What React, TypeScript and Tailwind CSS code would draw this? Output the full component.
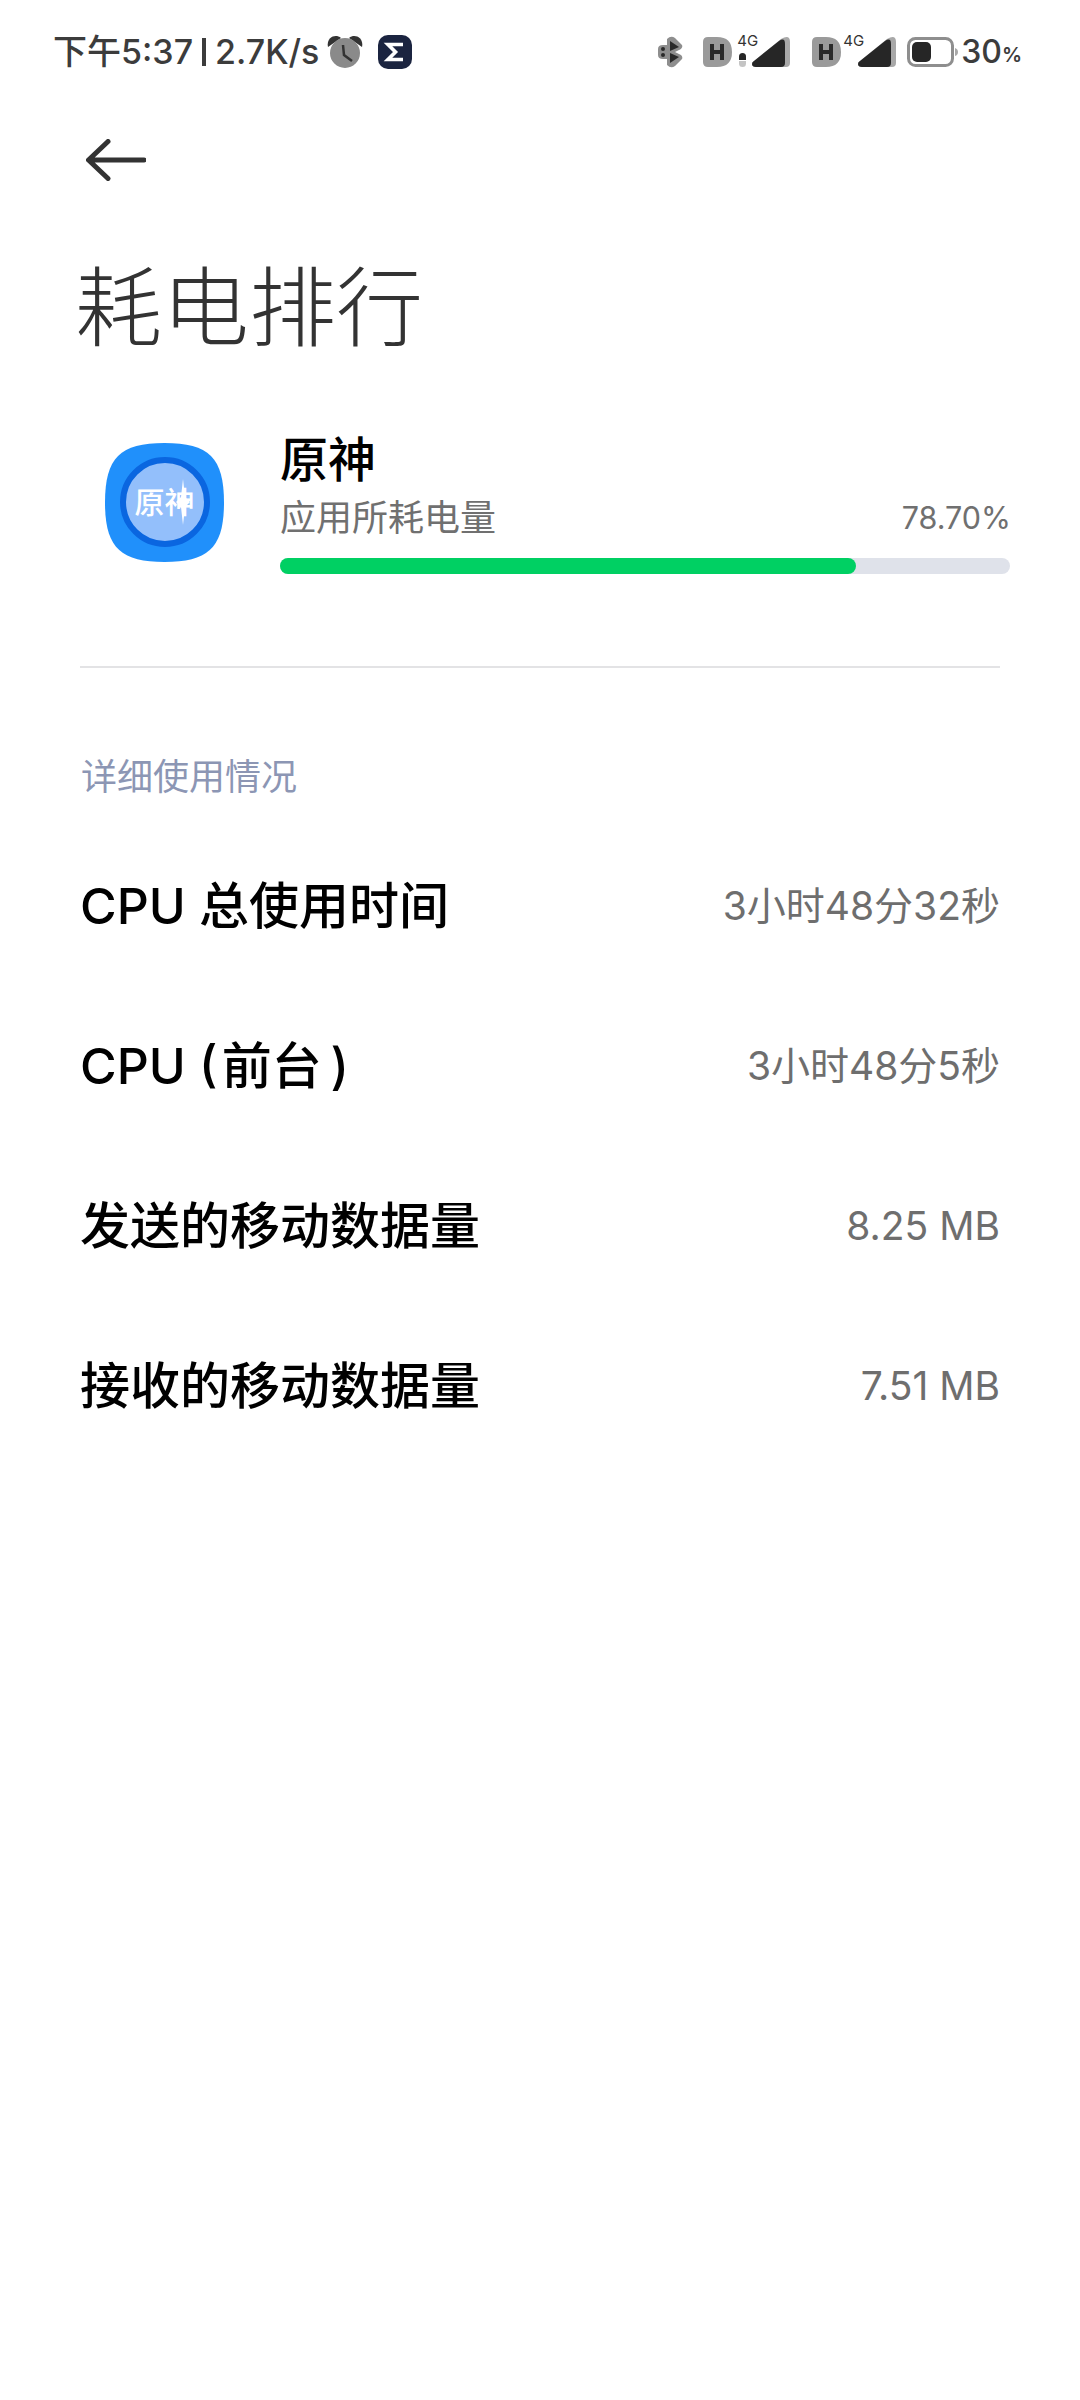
const rows = [
  { label: 'CPU 总使用时间', value: '3小时48分32秒' },
  { label: 'CPU (\u200A前台\u200A\u200A)', value: '3小时48分5秒' },
  { label: '发送的移动数据量', value: '8.25 MB' },
  { label: '接收的移动数据量', value: '7.51 MB' },
];

function AlarmIcon() {
  return (
    <svg width="36" height="34" viewBox="0 0 36 34" className="ml-[8px]">
      <path d="M1 12 C-1 3 8 -2 14 3 Z" fill="#333" />
      <path d="M35 12 C37 3 28 -2 22 3 Z" fill="#333" />
      <circle cx="18" cy="18" r="15" fill="#8a8a8a" />
      <path d="M16 10 L17 20 L25 26" fill="none" stroke="#333" strokeWidth="2.5" />
    </svg>
  );
}

function SigmaIcon() {
  return (
    <svg width="34" height="34" viewBox="0 0 34 34" className="ml-[15px]">
      <rect width="34" height="34" rx="10" fill="#1b2440" />
      <path d="M25 9.5 H10 L17.5 17 L10 24.5 H25" fill="none" stroke="#fff" strokeWidth="3.6" />
    </svg>
  );
}

function BtIcon() {
  return (
    <svg width="26" height="32" viewBox="0 0 26 32">
      <path d="M1 13 Q1 9 6 9 L12 9 L12 23 L6 23 Q1 23 1 19 Z" fill="#8e8e8e" />
      <path d="M10 3 Q14 -1 18 2 L25 9 Q26 11 24 13 L18 16 L24 19 Q26 21 25 23 L18 30 Q14 33 10 29 Z" fill="#8e8e8e" />
      <path d="M13 5 L22 11 L13 15 Z" fill="#2a2a2a" />
      <path d="M13 17 L22 21 L13 27 Z" fill="#2a2a2a" />
      <circle cx="6" cy="13" r="2" fill="#2a2a2a" />
      <circle cx="6" cy="19" r="2" fill="#2a2a2a" />
    </svg>
  );
}

function HBadge() {
  return (
    <svg width="29" height="30" viewBox="0 0 29 30">
      <path d="M0 5 Q0 0 5 0 L14 0 Q29 0 29 15 Q29 30 14 30 L5 30 Q0 30 0 25 Z" fill="#9a9a9a" />
      <path d="M9 7 V23 M19 7 V23 M9 15 H19" fill="none" stroke="#2a2a2a" strokeWidth="4" />
    </svg>
  );
}

function Signal() {
  return (
    <svg width="38" height="30" viewBox="0 0 38 30">
      <path d="M0 27 Q0 25 2 24 L29 2 Q38 -3 38 5 V26 Q38 30 34 30 H4 Q0 30 0 27 Z" fill="#a8a8a8" />
      <path d="M0 27 Q0 25 2 24 L27 4 Q33 0 33 7 V26 Q33 30 29 30 H4 Q0 30 0 27 Z" fill="#262626" />
    </svg>
  );
}

function Battery() {
  return (
    <svg width="51" height="30" viewBox="0 0 51 30">
      <rect x="1.5" y="1.5" width="44" height="27" rx="7" fill="#fff" stroke="#8e8e8e" strokeWidth="3" />
      <rect x="5" y="5" width="19" height="20" rx="5" fill="#262626" />
      <path d="M48 11 Q51 12 51 15 Q51 18 48 19 Z" fill="#a8a8a8" />
    </svg>
  );
}

function NetBadge({ dots }: { dots?: boolean }) {
  return (
    <div className="relative flex items-center">
      <HBadge />
      <span className={`absolute top-[-5px] text-[15px] leading-[18px] text-[#333] ${dots ? 'left-[34px]' : 'left-[31px]'}`}>4G</span>
      {dots ? (
        <div className="ml-[7px] mt-[16px] flex flex-col items-center gap-[1px]">
          <div className="h-[7px] w-[7px] rounded-t-full bg-[#262626]" />
          <div className="h-[6px] w-[7px] rounded-b-full bg-[#c4c4c4]" />
        </div>
      ) : null}
      <div className={dots ? 'ml-[6px]' : 'ml-[17px]'}>
        <Signal />
      </div>
    </div>
  );
}

function StatusBar() {
  return (
    <div className="flex h-[104px] items-center justify-between pl-[53px] pr-[58px] text-[#3c3c3c]">
      <div className="flex items-center">
        <span className="text-[34px] font-medium leading-none">下午5:37</span>
        <span className="ml-[9px] h-[28px] w-[4px] bg-[#3c3c3c]" />
        <span className="ml-[9px] text-[34px] font-medium leading-none">2.7K/s</span>
        <AlarmIcon />
        <SigmaIcon />
      </div>
      <div className="flex items-center">
        <BtIcon />
        <div className="ml-[20px]">
          <NetBadge dots />
        </div>
        <div className="ml-[22px]">
          <NetBadge />
        </div>
        <div className="ml-[11px]">
          <Battery />
        </div>
        <span className="ml-[3px] text-[32px] font-medium leading-none">30</span>
        <span className="mt-[6px] text-[20px] font-semibold leading-none">%</span>
      </div>
    </div>
  );
}

function AppIcon() {
  return (
    <div className="relative flex h-[119px] w-[119px] items-center justify-center">
      <svg width="119" height="119" viewBox="0 0 119 119" className="absolute inset-0">
        <path d="M59.5 0 C104 0 119 15 119 59.5 C119 104 104 119 59.5 119 C15 119 0 104 0 59.5 C0 15 15 0 59.5 0 Z" fill="#2090fb" />
      </svg>
      <div className="relative flex h-[90px] w-[90px] items-center justify-center rounded-full border-[6px] border-[#0a66e0] bg-[#93bffb]">
        <span className="text-[30px] font-medium leading-none text-white">原神</span>
        <svg width="14" height="46" viewBox="0 0 14 46" className="absolute left-[50px] top-[16px]">
          <path d="M7 0 L9 18 L14 23 L9 28 L7 46 L5 28 L0 23 L5 18 Z" fill="#fff" />
        </svg>
      </div>
    </div>
  );
}

export default function App() {
  return (
    <div className="min-h-[2400px] bg-white font-['Inter','Noto_Sans_CJK_SC',sans-serif]">
      <StatusBar />

      <div className="flex h-[112px] items-center pl-[86px]">
        <svg width="60" height="42" viewBox="0 0 60 42">
          <path d="M3 21 H58 M22 2.5 L2.5 21 L22 39.5" fill="none" stroke="#333" strokeWidth="5" strokeLinecap="round" strokeLinejoin="round" />
        </svg>
      </div>

      <h1 className="pl-[75px] pt-[38px] text-[87px] font-light leading-[110px] text-[#333]">耗电排行</h1>

      <div className="mt-[66px] flex items-center pl-[105px] pr-[70px]">
        <AppIcon />
        <div className="ml-[56px] flex-1">
          <div className="text-[48px] font-medium leading-[60px] text-black">原神</div>
          <div className="mt-[3px] flex items-center justify-between text-[36px] leading-[50px] text-[#707070]">
            <span>应用所耗电量</span>
            <span className="mr-[-1px] text-[30.5px]">78.70%</span>
          </div>
          <div className="mt-[15px] h-[16px] rounded-full bg-[#dfe2ea]">
            <div className="h-full w-[78.9%] rounded-full bg-[#00d063]" />
          </div>
        </div>
      </div>

      <div className="mx-[80px] mt-[92px] h-[2px] bg-[#e3e3e5]" />

      <div className="pl-[81px] pt-[85px] text-[36px] leading-[48px] text-[#8c96b4]">详细使用情况</div>

      <div className="mt-[25px] px-[80px]">
        {rows.map((row) => (
          <div key={row.label} className="flex h-[160px] items-center justify-between">
            <span className="text-[50px] font-medium text-black">{row.label}</span>
            <span className="text-[39px] text-[#6e6e6e]">{row.value}</span>
          </div>
        ))}
      </div>
    </div>
  );
}
